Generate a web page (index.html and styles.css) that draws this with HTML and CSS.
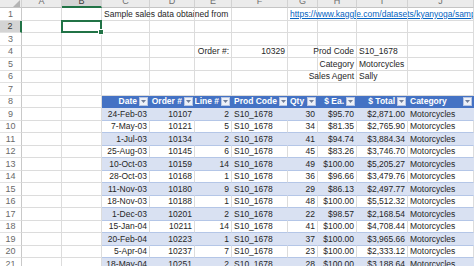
FILE: index.html
```html
<!DOCTYPE html>
<html>
<head>
<meta charset="utf-8">
<link rel="stylesheet" href="styles.css">
</head>
<body>
<div class="sheet">
  <div class="row colh">
    <div class="corner"><svg width="8" height="8" viewBox="0 0 8 8"><polygon points="8,0 8,7 1,7" fill="#b4b4b4"/></svg></div>
    <div><span>A</span></div><div class="on"><span>B</span></div><div><span>C</span></div><div><span>D</span></div><div><span>E</span></div><div><span>F</span></div><div><span>G</span></div><div><span>H</span></div><div><span>I</span></div><div><span>J</span></div>
  </div>
  <div class="row"><div class="rh">1</div><div></div><div></div><div>Sample sales data obtained from</div><div></div><div></div><div></div><div><a class="link" href="#">https://www.kaggle.com/datasets/kyanyoga/sample-sales-data</a></div><div></div><div></div><div></div></div>
  <div class="row"><div class="rh on">2</div><div></div><div class="sel"></div><div></div><div></div><div></div><div></div><div></div><div></div><div></div><div></div></div>
  <div class="row"><div class="rh">3</div><div></div><div></div><div></div><div></div><div></div><div></div><div></div><div></div><div></div><div></div></div>
  <div class="row"><div class="rh">4</div><div></div><div></div><div></div><div></div><div class="n">Order #:</div><div class="n">10329</div><div></div><div class="n">Prod Code</div><div>S10_1678</div><div></div></div>
  <div class="row"><div class="rh">5</div><div></div><div></div><div></div><div></div><div></div><div></div><div></div><div class="n">Category</div><div>Motorcycles</div><div></div></div>
  <div class="row"><div class="rh">6</div><div></div><div></div><div></div><div></div><div></div><div></div><div></div><div class="n">Sales Agent</div><div>Sally</div><div></div></div>
  <div class="row"><div class="rh">7</div><div></div><div></div><div></div><div></div><div></div><div></div><div></div><div></div><div></div><div></div></div>
  <div class="row"><div class="rh">8</div><div></div><div></div>
    <div class="th">Date<span class="dd"><svg width="5" height="3" viewBox="0 0 5 3"><polygon points="0,0 5,0 2.5,3" fill="#6f7d99"/></svg></span></div>
    <div class="th">Order #<span class="dd"><svg width="5" height="3" viewBox="0 0 5 3"><polygon points="0,0 5,0 2.5,3" fill="#6f7d99"/></svg></span></div>
    <div class="th">Line #<span class="dd"><svg width="5" height="3" viewBox="0 0 5 3"><polygon points="0,0 5,0 2.5,3" fill="#6f7d99"/></svg></span></div>
    <div class="th l">Prod Code<span class="dd"><svg width="5" height="3" viewBox="0 0 5 3"><polygon points="0,0 5,0 2.5,3" fill="#6f7d99"/></svg></span></div>
    <div class="th l">Qty<span class="dd"><svg width="5" height="3" viewBox="0 0 5 3"><polygon points="0,0 5,0 2.5,3" fill="#6f7d99"/></svg></span></div>
    <div class="th">$ Ea.<span class="dd"><svg width="5" height="3" viewBox="0 0 5 3"><polygon points="0,0 5,0 2.5,3" fill="#6f7d99"/></svg></span></div>
    <div class="th">$ Total<span class="dd"><svg width="5" height="3" viewBox="0 0 5 3"><polygon points="0,0 5,0 2.5,3" fill="#6f7d99"/></svg></span></div>
    <div class="th l">Category<span class="dd"><svg width="5" height="3" viewBox="0 0 5 3"><polygon points="0,0 5,0 2.5,3" fill="#6f7d99"/></svg></span></div>
  </div>
  <div class="row odd"><div class="rh">9</div><div></div><div></div><div class="t n">24-Feb-03</div><div class="t n">10107</div><div class="t n">2</div><div class="t">S10_1678</div><div class="t n">30</div><div class="t n">$95.70</div><div class="t n">$2,871.00</div><div class="t">Motorcycles</div></div>
  <div class="row"><div class="rh">10</div><div></div><div></div><div class="t n">7-May-03</div><div class="t n">10121</div><div class="t n">5</div><div class="t">S10_1678</div><div class="t n">34</div><div class="t n">$81.35</div><div class="t n">$2,765.90</div><div class="t">Motorcycles</div></div>
  <div class="row odd"><div class="rh">11</div><div></div><div></div><div class="t n">1-Jul-03</div><div class="t n">10134</div><div class="t n">2</div><div class="t">S10_1678</div><div class="t n">41</div><div class="t n">$94.74</div><div class="t n">$3,884.34</div><div class="t">Motorcycles</div></div>
  <div class="row"><div class="rh">12</div><div></div><div></div><div class="t n">25-Aug-03</div><div class="t n">10145</div><div class="t n">6</div><div class="t">S10_1678</div><div class="t n">45</div><div class="t n">$83.26</div><div class="t n">$3,746.70</div><div class="t">Motorcycles</div></div>
  <div class="row odd"><div class="rh">13</div><div></div><div></div><div class="t n">10-Oct-03</div><div class="t n">10159</div><div class="t n">14</div><div class="t">S10_1678</div><div class="t n">49</div><div class="t n">$100.00</div><div class="t n">$5,205.27</div><div class="t">Motorcycles</div></div>
  <div class="row"><div class="rh">14</div><div></div><div></div><div class="t n">28-Oct-03</div><div class="t n">10168</div><div class="t n">1</div><div class="t">S10_1678</div><div class="t n">36</div><div class="t n">$96.66</div><div class="t n">$3,479.76</div><div class="t">Motorcycles</div></div>
  <div class="row odd"><div class="rh">15</div><div></div><div></div><div class="t n">11-Nov-03</div><div class="t n">10180</div><div class="t n">9</div><div class="t">S10_1678</div><div class="t n">29</div><div class="t n">$86.13</div><div class="t n">$2,497.77</div><div class="t">Motorcycles</div></div>
  <div class="row"><div class="rh">16</div><div></div><div></div><div class="t n">18-Nov-03</div><div class="t n">10188</div><div class="t n">1</div><div class="t">S10_1678</div><div class="t n">48</div><div class="t n">$100.00</div><div class="t n">$5,512.32</div><div class="t">Motorcycles</div></div>
  <div class="row odd"><div class="rh">17</div><div></div><div></div><div class="t n">1-Dec-03</div><div class="t n">10201</div><div class="t n">2</div><div class="t">S10_1678</div><div class="t n">22</div><div class="t n">$98.57</div><div class="t n">$2,168.54</div><div class="t">Motorcycles</div></div>
  <div class="row"><div class="rh">18</div><div></div><div></div><div class="t n">15-Jan-04</div><div class="t n">10211</div><div class="t n">14</div><div class="t">S10_1678</div><div class="t n">41</div><div class="t n">$100.00</div><div class="t n">$4,708.44</div><div class="t">Motorcycles</div></div>
  <div class="row odd"><div class="rh">19</div><div></div><div></div><div class="t n">20-Feb-04</div><div class="t n">10223</div><div class="t n">1</div><div class="t">S10_1678</div><div class="t n">37</div><div class="t n">$100.00</div><div class="t n">$3,965.66</div><div class="t">Motorcycles</div></div>
  <div class="row"><div class="rh">20</div><div></div><div></div><div class="t n">5-Apr-04</div><div class="t n">10237</div><div class="t n">7</div><div class="t">S10_1678</div><div class="t n">23</div><div class="t n">$100.00</div><div class="t n">$2,333.12</div><div class="t">Motorcycles</div></div>
  <div class="row odd"><div class="rh">21</div><div></div><div></div><div class="t n">18-May-04</div><div class="t n">10251</div><div class="t n">2</div><div class="t">S10_1678</div><div class="t n">28</div><div class="t n">$100.00</div><div class="t n">$3,188.64</div><div class="t">Motorcycles</div></div>
</div>
</body>
</html>
```
FILE: styles.css
```css
html, body {
  margin: 0;
  padding: 0;
}
body {
  width: 474px;
  height: 266px;
  overflow: hidden;
  background: #ffffff;
  font-family: "Liberation Sans", Arial, sans-serif;
  font-size: 8.5px;
  color: #262626;
}
.sheet {
  display: flex;
  flex-direction: column;
}
.row {
  display: grid;
  grid-template-columns: 22px 40px 40px 48px 45px 37px 56px 30px 39px 51px 66px;
  height: 12.5px;
  flex: none;
}
.row > div {
  box-sizing: border-box;
  border-right: 1px solid #dcdcdc;
  border-bottom: 1px solid #dcdcdc;
  display: flex;
  align-items: center;
  padding: 0 2px;
  white-space: nowrap;
  min-width: 0;
}
.row > .n {
  justify-content: flex-end;
}
.colh {
  height: 8px;
}
.colh > div {
  background: #ebebeb;
  border-right-color: #d2d2d2;
  border-bottom-color: #c4c4c4;
  justify-content: center;
  align-items: flex-start;
  overflow: hidden;
  color: #6f6f6f;
  font-size: 9px;
}
.colh span {
  line-height: 10px;
  margin-top: -4px;
}
.colh > .corner {
  justify-content: flex-end;
  align-items: flex-start;
  padding: 0 1px 0 0;
}
.colh > .on {
  background: #d4d4d4;
  border-bottom: 2px solid #217346;
  color: #3a3a3a;
}
.rh {
  justify-content: center;
  color: #6a6a6a;
  background: #ffffff;
  font-size: 9px;
}
.row > .rh {
  border-right-color: #c9c9c9;
  border-bottom-color: #e2e2e2;
  padding: 0;
  justify-content: center;
}
.row > .rh.on {
  background: #d4d4d4;
  border-right: 2px solid #217346;
  color: #3a3a3a;
}
.sel {
  position: relative;
}
.sel::after {
  content: "";
  position: absolute;
  left: -1px;
  top: -1px;
  right: -1px;
  bottom: -1px;
  border: 2px solid #217346;
}
.sel::before {
  content: "";
  position: absolute;
  right: -3px;
  bottom: -3px;
  width: 4px;
  height: 4px;
  background: #217346;
  border: 1px solid #ffffff;
  z-index: 1;
}
.link {
  color: #0563c1;
  text-decoration: underline;
}
.row > .th {
  background: #4472c4;
  border-right-color: #4472c4;
  border-bottom-color: #4472c4;
  color: #ffffff;
  font-weight: bold;
  justify-content: flex-end;
  gap: 2px;
  padding: 0 1px 0 2px;
  overflow: hidden;
}
.row > .th.l {
  justify-content: flex-start;
}
.th.l .dd {
  margin-left: auto;
}
.dd {
  width: 9px;
  height: 9px;
  box-sizing: border-box;
  background: #eef1f8;
  border: 1px solid #b7c5e2;
  display: flex;
  align-items: center;
  justify-content: center;
  flex: none;
}
.row > .t {
  border-bottom-color: #b4c6e7;
}
.row.odd > .t {
  background: #d9e1f2;
  border-right-color: #d9e1f2;
}
```
